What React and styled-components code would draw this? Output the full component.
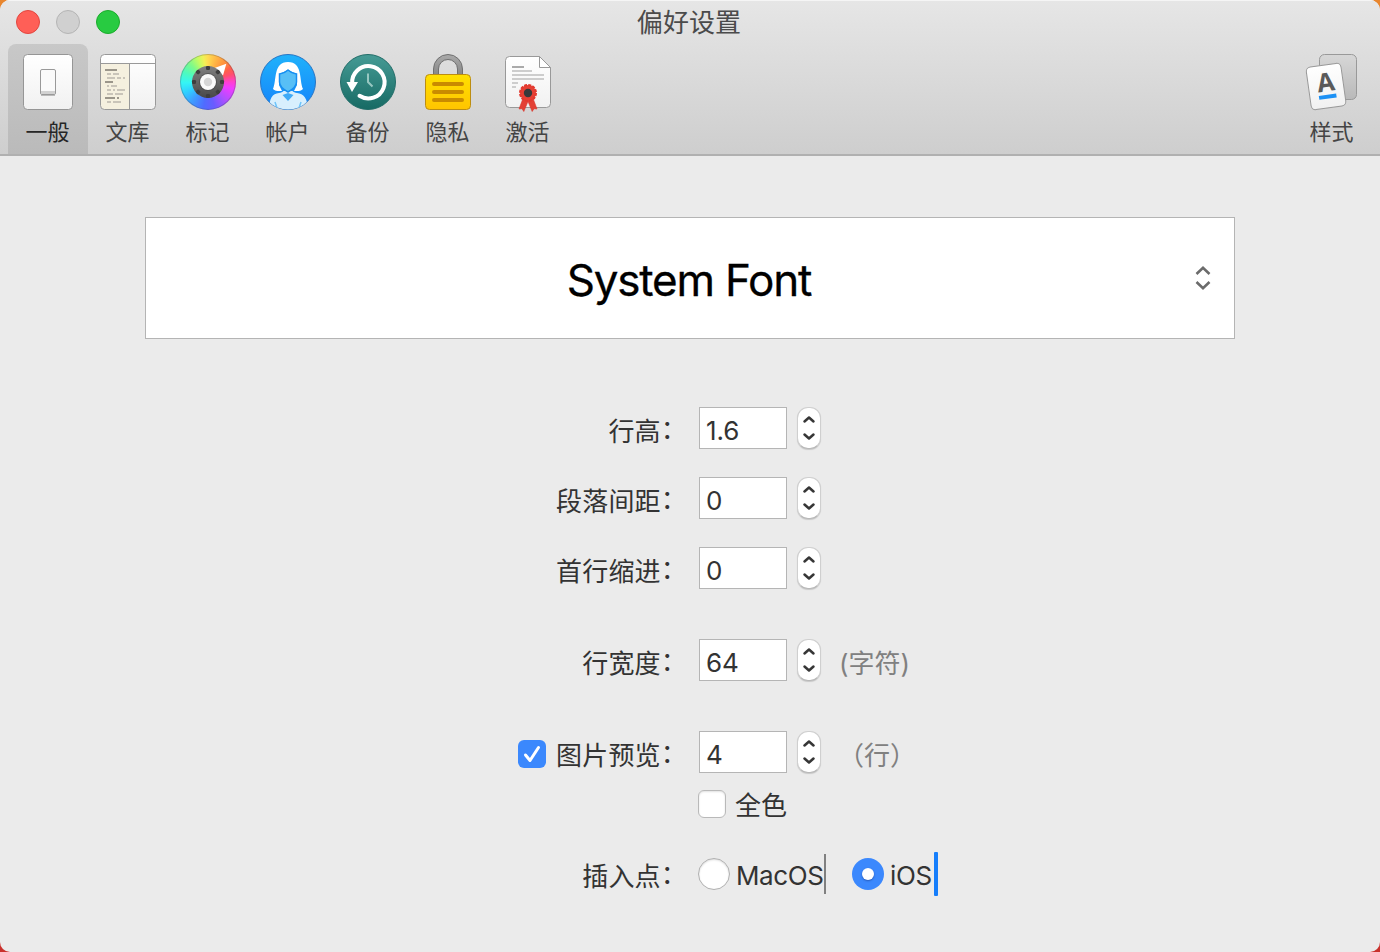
import React, { useState } from "react";
import styled, { createGlobalStyle, css } from "styled-components";

const GlobalStyle = createGlobalStyle`
  * { box-sizing: border-box; }
  body {
    margin: 0;
    background: linear-gradient(#e8862e, #c9302c);
    font-family: Inter, "Noto Sans CJK SC", sans-serif;
    color: #333;
  }
`;

const Window = styled.main`
  width: 1380px;
  height: 952px;
  overflow: hidden;
  border-radius: 10px;
  background: #ebebeb;
`;

const Header = styled.header`
  height: 156px;
  background: linear-gradient(#e6e6e6, #cecece);
  border-bottom: 2px solid #b0b0b0;
  box-shadow: inset 0 1px 0 #f5f5f5;
`;

const TitleBar = styled.div`
  display: grid;
  grid-template-columns: 1fr auto 1fr;
  align-items: center;
  height: 44px;
  padding-left: 16px;
`;

const Lights = styled.div`
  display: flex;
  gap: 16px;
`;

const Light = styled.span`
  width: 24px;
  height: 24px;
  border-radius: 50%;
  background: ${(p) => p.$fill};
  border: 1px solid ${(p) => p.$edge};
`;

const Title = styled.h1`
  margin: 0 18px 0 0;
  padding-top: 2px;
  font-size: 26px;
  font-weight: 400;
  line-height: 40px;
  letter-spacing: 0.1px;
  color: #4b4b4b;
`;

const Toolbar = styled.nav`
  display: flex;
  height: 110px;
  padding: 0 8px;
`;

const Tab = styled.button`
  display: flex;
  flex-direction: column;
  align-items: center;
  width: 80px;
  height: 110px;
  padding: 8px 0 0;
  border: 0;
  border-radius: 8px 8px 0 0;
  background: ${(p) => (p.$active ? "linear-gradient(#c8c8c8, #bababa)" : "none")};
  color: ${(p) => (p.$active ? "#262626" : "#444")};
  font: 400 22px/32px Inter, "Noto Sans CJK SC", sans-serif;
  ${(p) => p.$end && css`margin-left: auto;`}

  svg { display: block; flex: none; overflow: visible; }
`;

const TabLabel = styled.span`
  margin: 4px 1px 0 0;
  height: 32px;
`;

const IconBox = styled.span`
  display: block;
  width: 60px;
  height: 60px;
`;

const Wheel = styled.span`
  display: block;
  width: 56px;
  height: 56px;
  margin: 2px;
  border-radius: 50%;
  background: conic-gradient(
    #ffdb50 0deg, #ffb545 20deg, #ff8f3c 42deg, #ff5f4a 58deg, #ff4f6e 72deg, #ff3fd0 90deg, #f03cff 105deg,
    #b050ff 135deg, #6a5cff 165deg, #4f6cff 190deg, #3e9dff 220deg, #30d0ff 245deg,
    #35f5f5 268deg, #4dfabf 292deg, #7dfa8a 315deg, #c5fb62 336deg, #f2f056 350deg, #ffdb50 360deg
  );
  box-shadow: inset 0 0 0 1px rgba(60, 60, 80, 0.28);
`;

const Content = styled.section`
  display: flex;
  flex-direction: column;
  padding-top: 61px;
`;

const FontPicker = styled.button`
  display: grid;
  grid-template-columns: 1fr auto 1fr;
  align-items: center;
  width: 1090px;
  height: 122px;
  margin: 0 auto 68px 145px;
  padding: 0 23px;
  border: 1px solid #b4b4b4;
  background: #fff;
  color: #000;
  font: 400 44px/56px Inter, sans-serif;

  svg { justify-self: end; display: block; }
`;

const FontName = styled.span`
  grid-column: 2;
  margin-right: 2px;
  letter-spacing: -1.2px;
  padding-top: 4px;
  -webkit-text-stroke: 0.3px #000;
`;

const Row = styled.div`
  display: grid;
  grid-template-columns: 687px auto;
  grid-template-rows: 100%;
  column-gap: 11px;
  align-items: center;
  height: ${(p) => p.$height || 42}px;
  margin-bottom: ${(p) => p.$after || 0}px;
`;

const LabelCell = styled.div`
  display: flex;
  justify-content: flex-end;
  align-items: center;
  gap: 10px;
`;

const Label = styled.span`
  padding-top: ${(p) => p.$drop || 8}px;
  font-size: 26px;
  line-height: 34px;
  letter-spacing: 0.2px;
`;

const Colon = styled.span`
  line-height: 0;
  vertical-align: 2px;
`;

const Controls = styled.div`
  display: flex;
  align-items: center;
`;

const Field = styled.input`
  width: 88px;
  height: 42px;
  margin: 0 10px 0 1px;
  padding: 4px 6px 0;
  border: 1px solid #b5b5b5;
  border-radius: 0;
  outline: 0;
  background: #fff;
  color: #333;
  font: 400 26px/34px Inter, sans-serif;
  letter-spacing: -0.1px;
`;

const StepperBox = styled.span`
  display: grid;
  place-items: center;
  width: 24px;
  height: 42px;
  border-radius: 11px;
  background: #fff;
  border: 1px solid #cfcfcf;
  border-bottom-color: #b8b8b8;
  box-shadow: 0 1px 1px rgba(0, 0, 0, 0.15);
`;

const Unit = styled.span`
  margin-left: ${(p) => p.$left}px;
  padding-top: 8px;
  color: #808080;
  font-size: 26px;
  line-height: 34px;
`;

const Check = styled.span`
  display: grid;
  place-items: center;
  width: 28px;
  height: 28px;
  margin-top: ${(p) => p.$drop || 0}px;
  border-radius: 6px;
  ${(p) =>
    p.$on
      ? css`background: #3b88fd;`
      : css`background: #fff; border: 1px solid #b9b9b9; box-shadow: inset 0 1px 2px rgba(0, 0, 0, 0.12);`}
`;

const Radio = styled.span`
  display: grid;
  place-items: center;
  width: 32px;
  height: 32px;
  border-radius: 50%;
  ${(p) =>
    p.$on
      ? css`background: #3b88fd;`
      : css`background: #fff; border: 1px solid #b0b0b0; box-shadow: inset 0 1px 2px rgba(0, 0, 0, 0.15);`}

  &::after {
    content: "";
    display: ${(p) => (p.$on ? "block" : "none")};
    width: 12px;
    height: 12px;
    border-radius: 50%;
    background: #fff;
    box-shadow: 0 1px 2px rgba(0, 0, 60, 0.35);
  }
`;

const ChoiceText = styled.span`
  margin-left: ${(p) => p.$left}px;
  width: ${(p) => (p.$width ? `${p.$width}px` : "auto")};
  padding-top: 4px;
  font-size: 26px;
  line-height: 24px;
  letter-spacing: ${(p) => p.$spacing || 0}px;
  white-space: nowrap;
`;

const Caret = styled.span`
  width: ${(p) => p.$w}px;
  height: ${(p) => p.$h}px;
  margin-right: ${(p) => p.$after || 0}px;
  border-radius: ${(p) => p.$round || 0}px;
  background: ${(p) => p.$color};
`;

const SwitchIcon = () => (
  <svg width="60" height="60" viewBox="0 0 60 60">
    <defs>
      <linearGradient id="plate" x2="0" y2="1"><stop stopColor="#fff" /><stop offset="1" stopColor="#f1f1f1" /></linearGradient>
    </defs>
    <rect x="5.5" y="2.5" width="49" height="55" rx="4" fill="url(#plate)" stroke="#969696" />
    <rect x="22.5" y="17.5" width="15" height="25" rx="1.5" fill="#fafafa" stroke="#999" />
    <path d="M23 39h14v3H23z" fill="#d2d2d2" />
    <path d="M23 43.5h14" stroke="#bbb" />
  </svg>
);

const codeLines = [
  [7, 17, 12, 1], [9, 21, 4], [15, 21, 6], [9, 25, 8], [19, 25, 4], [25, 25, 2],
  [7, 29, 8, 1], [9, 33, 2], [13, 33, 6], [9, 37, 4], [15, 37, 2], [19, 37, 8],
  [9, 41, 6], [17, 41, 8], [7, 45, 10, 1], [19, 45, 2, 1], [9, 49, 4], [15, 49, 8],
];

const LibraryIcon = () => (
  <svg width="60" height="60" viewBox="0 0 60 60">
    <rect x="2.5" y="2.5" width="55" height="55" rx="4" fill="url(#plate)" />
    <path d="M3 11h28v46H6q-3 0-3-3z" fill="#f5f0df" />
    {codeLines.map(([x, y, w, dark], i) => (
      <rect key={i} x={x} y={y} width={w} height="2" fill={dark ? "#9b968b" : "#c9c4b9"} />
    ))}
    <path d="M3 11.5h54M31.5 12v45" stroke="#999" fill="none" />
    <rect x="2.5" y="2.5" width="55" height="55" rx="4" fill="none" stroke="#999" />
  </svg>
);

const knobAngles = [0, 45, 90, 135, 180, 225, 270, 315];

const MarkupIcon = () => (
  <Wheel>
    <svg width="56" height="56" viewBox="0 0 56 56">
      <defs>
        <linearGradient id="knob" x2="0" y2="1"><stop stopColor="#808080" /><stop offset="1" stopColor="#484848" /></linearGradient>
      </defs>
      <path d="M46.3 9.7 34.5 14l8.5 7.500z" fill="#fff" />
      <circle cx="28" cy="28" r="16" fill="url(#knob)" />
      {knobAngles.map((a) => (
        <rect key={a} x="26" y="12" width="4" height="4" rx="1.2" fill="#3e3e3e" transform={`rotate(${a} 28 28)`} />
      ))}
      <circle cx="28" cy="28" r="9" fill="#444" opacity=".6" />
      <circle cx="28" cy="28" r="8" fill="#fafafa" />
      <circle cx="28" cy="28" r="4.2" fill="#d6d6d6" />
    </svg>
  </Wheel>
);

const AccountIcon = () => (
  <svg width="60" height="60" viewBox="0 0 60 60">
    <defs>
      <linearGradient id="sky" x2="0" y2="1"><stop stopColor="#1fb2fb" /><stop offset="1" stopColor="#1583fa" /></linearGradient>
      <clipPath id="disc"><circle cx="30" cy="30" r="27.5" /></clipPath>
    </defs>
    <circle cx="30" cy="30" r="27.5" fill="url(#sky)" stroke="#2875c4" />
    <g clipPath="url(#disc)">
      <path d="M11 60c0-14 3-18 10-19 2-.3 3.500-1 4.500-2h9c1 1 2.500 1.700 4.500 2 7 1 11 5 11 19z" fill="#d8effd" />
      <path d="M17 50l3 9M43 50l-3 9" stroke="#6dc4fb" strokeWidth="1.5" />
      <path d="M24.500 43 30 49l5.500-6-5.500-2z" fill="#3faaf6" />
      <path d="M15 37c4-9 0-27 15-27s11 18 15 27c-2 2-5 2.300-9 2l3-6V22L30 18l-9 4v11l3 6c-4 .3-7 0-9-2z" fill="#fff" />
      <path d="M30 18c-2.500 2.500-5 3.500-8.500 4v8c0 4 4 7.500 8.500 10 4.500-2.500 8.500-6 8.500-10v-8c-3.500-.500-6-1.500-8.500-4z" fill="#58bff6" stroke="#188ff0" strokeWidth="1.5" />
    </g>
  </svg>
);

const BackupIcon = () => (
  <svg width="60" height="60" viewBox="0 0 60 60">
    <defs>
      <linearGradient id="teal" x2="0" y2="1"><stop stopColor="#469b95" /><stop offset="1" stopColor="#176a64" /></linearGradient>
    </defs>
    <circle cx="30" cy="30" r="27.5" fill="url(#teal)" stroke="#236d69" />
    <path d="M14.200 31.500A16.200 16.200 0 1 1 21.500 43.800" fill="none" stroke="#fff" strokeWidth="4" strokeLinecap="round" />
    <path d="M8.500 30h11.500L14 40z" fill="#fff" />
    <path d="M30 21.500V30l4.500 4.500" fill="none" stroke="#97c7c1" strokeWidth="2" />
  </svg>
);

const LockIcon = () => (
  <svg width="60" height="60" viewBox="0 0 60 60">
    <defs>
      <linearGradient id="gold" x2="0" y2="1"><stop stopColor="#ffe000" /><stop offset="1" stopColor="#ffc400" /></linearGradient>
      <linearGradient id="steel" x2="0" y2="1"><stop stopColor="#aaa" /><stop offset="1" stopColor="#858585" /></linearGradient>
    </defs>
    <path d="M15.500 24v-7a14.500 14.500 0 0 1 29 0v7h-5v-7a9.500 9.500 0 0 0-19 0v7z" fill="url(#steel)" stroke="#707070" />
    <rect x="7.5" y="22.5" width="45" height="35" rx="4" fill="url(#gold)" stroke="#bc8d12" />
    <path d="M16 32h28M16 40h28M16 48h28" stroke="#c98b00" strokeWidth="4" strokeLinecap="round" />
  </svg>
);

const LicenseIcon = () => (
  <svg width="60" height="60" viewBox="0 0 60 60">
    <path d="M11.500 4.500h30l11 11v36q0 4-4 4h-37q-4 0-4-4v-43q0-4 4-4z" fill="url(#plate)" stroke="#999" />
    <path d="M41.500 4.500v11h11z" fill="#fff" stroke="#999" strokeLinejoin="round" />
    <path d="M14 15h12" stroke="#aaa" strokeWidth="2" />
    <path d="M14 19h20M14 23h32M14 27h32M14 31h6M14 35h4" stroke="#cdcdcd" strokeWidth="2" />
    <path d="M25.500 45 21 57l3-.300 1.800 2.800L30 49.500l4.200 10L36 56.700l3 .300L34.500 45z" fill="#e34035" stroke="#d8362c" strokeWidth=".6" />
    <circle cx="30" cy="41" r="8" fill="#e63f34" />
    <circle cx="30" cy="41" r="8" fill="none" stroke="#e2382e" strokeWidth="2" strokeDasharray="3 1.190" />
    <circle cx="30" cy="41" r="4.2" fill="#37393b" />
  </svg>
);

const StyleIcon = () => (
  <svg width="60" height="60" viewBox="0 0 60 60">
    <defs>
      <linearGradient id="card" x2="0" y2="1"><stop stopColor="#d7d7d7" /><stop offset="1" stopColor="#b9b9b9" /></linearGradient>
    </defs>
    <rect x="17.5" y="2.5" width="37" height="45" rx="5" fill="url(#card)" stroke="#999" />
    <g transform="rotate(-8 24 34)">
      <rect x="6.5" y="13" width="35" height="43" rx="4.5" fill="url(#plate)" stroke="#999" />
      <text x="24.3" y="39.3" textAnchor="middle" fontFamily="Open Sans" fontWeight="700" fontSize="25.5" fill="#5a5a5a">A</text>
      <path d="M15.500 44.800h17.500" stroke="#1d91f5" strokeWidth="4" />
    </g>
  </svg>
);

const Stepper = () => (
  <StepperBox>
    <svg width="14" height="26" viewBox="0 0 14 26" fill="none" stroke="#363636" strokeWidth="2.5" strokeLinecap="round" strokeLinejoin="round">
      <path d="M2.500 6.500 7 2.500l4.500 4M2.500 19.500l4.500 4 4.500-4" />
    </svg>
  </StepperBox>
);

const tabs = [
  ["一般", SwitchIcon],
  ["文库", LibraryIcon],
  ["标记", MarkupIcon],
  ["帐户", AccountIcon],
  ["备份", BackupIcon],
  ["隐私", LockIcon],
  ["激活", LicenseIcon],
  ["样式", StyleIcon],
];

function NumberRow({ label, value, after, unit, unitLeft, checked }) {
  return (
    <Row $after={after}>
      <LabelCell>
        {checked && (
          <Check $on $drop={4}>
            <svg width="28" height="28" viewBox="0 0 28 28" fill="none" stroke="#fff" strokeWidth="3" strokeLinecap="round" strokeLinejoin="round">
              <path d="m7.500 15 4.500 5.500L20.500 7.500" />
            </svg>
          </Check>
        )}
        <Label>{label}<Colon>：</Colon></Label>
      </LabelCell>
      <Controls>
        <Field defaultValue={value} aria-label={label} />
        <Stepper />
        {unit && <Unit $left={unitLeft}>{unit}</Unit>}
      </Controls>
    </Row>
  );
}

export default function App() {
  const [active, setActive] = useState("一般");
  return (
    <Window>
      <GlobalStyle />
      <Header>
        <TitleBar>
          <Lights>
            <Light $fill="#ff5f57" $edge="#e2463f" />
            <Light $fill="#d0d0d0" $edge="#b4b4b4" />
            <Light $fill="#28cb41" $edge="#1bac2c" />
          </Lights>
          <Title>偏好设置</Title>
        </TitleBar>
        <Toolbar>
          {tabs.map(([name, Icon]) => (
            <Tab key={name} $active={name === active} $end={name === "样式"} onClick={() => setActive(name)}>
              <IconBox><Icon /></IconBox>
              <TabLabel>{name}</TabLabel>
            </Tab>
          ))}
        </Toolbar>
      </Header>
      <Content>
        <FontPicker>
          <FontName>System Font</FontName>
          <svg width="16" height="24" viewBox="0 0 16 24" fill="none" stroke="#6b6b6b" strokeWidth="2.6">
            <path d="M1.500 8 8 1.800 14.500 8M1.500 16 8 22.200 14.500 16" />
          </svg>
        </FontPicker>
        <NumberRow label="行高" value="1.6" after={28} />
        <NumberRow label="段落间距" value="0" after={28} />
        <NumberRow label="首行缩进" value="0" after={50} />
        <NumberRow label="行宽度" value="64" after={50} unit="(字符)" unitLeft={18} />
        <NumberRow label="图片预览" value="4" after={17} unit="（行）" unitLeft={17} checked />
        <Row $height={28} $after={34}>
          <LabelCell />
          <Controls>
            <Check />
            <ChoiceText $left={9}>全色</ChoiceText>
          </Controls>
        </Row>
        <Row $height={44}>
          <LabelCell><Label $drop={6}>插入点<Colon>：</Colon></Label></LabelCell>
          <Controls>
            <Radio />
            <ChoiceText $left={6} $width={88} $spacing={-0.4}>MacOS</ChoiceText>
            <Caret $w={2} $h={40} $color="#808080" $after={26} />
            <Radio $on />
            <ChoiceText $left={6} $width={44} $spacing={-0.4}>iOS</ChoiceText>
            <Caret $w={4} $h={44} $color="#157efb" $round={1} />
          </Controls>
        </Row>
      </Content>
    </Window>
  );
}
